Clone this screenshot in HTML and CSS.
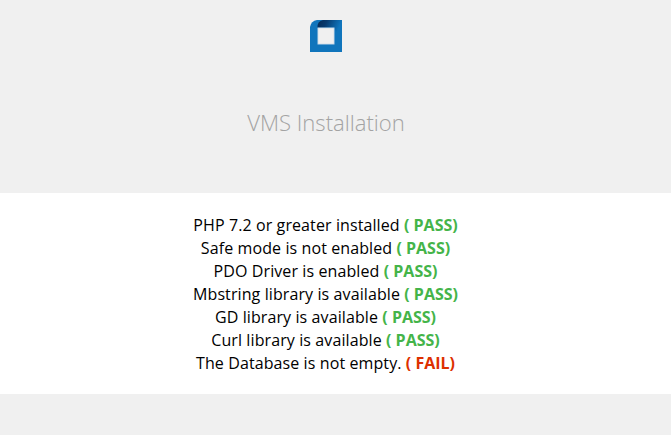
FILE: index.html
```
<!DOCTYPE html>
<html lang="en">
<head>
<meta charset="utf-8">
<title>VMS Installation</title>
<link rel="stylesheet" href="styles.css">
</head>
<body>
<header class="header">
<svg class="logo" viewBox="0 0 32 32" aria-hidden="true">
<defs><linearGradient id="shade" x1="8" y1="2" x2="28" y2="10" gradientUnits="userSpaceOnUse"><stop offset="0" stop-color="#052c58"/><stop offset=".35" stop-color="#06396d"/><stop offset="1" stop-color="#1075bc"/></linearGradient></defs>
<path fill="#1075bc" d="M7 0H32V32H0V7Q1 1 7 0Z"/>
<path fill="url(#shade)" d="M13 0H32V20L24 8H7.5Q7 1 13 0Z"/>
<path fill="#f0f0f0" stroke="#7fb2da" stroke-width=".6" d="M7.7 7.7H24.3V24.3H7.7Z"/>
</svg>
<h1 class="title">VMS Installation</h1>
</header>
<main class="panel">
<ul class="checks">
<li>PHP 7.2 or greater installed <b class="pass">( PASS)</b></li>
<li>Safe mode is not enabled <b class="pass">( PASS)</b></li>
<li>PDO Driver is enabled <b class="pass">( PASS)</b></li>
<li>Mbstring library is available <b class="pass">( PASS)</b></li>
<li>GD library is available <b class="pass">( PASS)</b></li>
<li>Curl library is available <b class="pass">( PASS)</b></li>
<li>The Database is not empty. <b class="fail">( FAIL)</b></li>
</ul>
</main>
</body>
</html>
```
FILE: styles.css
```
body {
  margin: 0;
  background: #f0f0f0;
  color: #000;
  font: 16px/23px "Open Sans", sans-serif;
}
.header {
  display: flex;
  flex-direction: column;
  align-items: center;
  height: 193px;
  padding: 20px 19px 0 0;
  box-sizing: border-box;
}
.logo {
  width: 32px;
  height: 32px;
}
.title {
  margin: 53px 0 0;
  font: 300 22.1px/34px "Open Sans", sans-serif;
  color: #a3a3a3;
}
.panel {
  height: 201px;
  padding: 21px 20px 0 0;
  box-sizing: border-box;
  background: #fff;
  text-align: center;
}
.checks {
  margin: 0;
  padding: 0;
  list-style: none;
  letter-spacing: 0.1px;
}
.pass,
.fail {
  letter-spacing: 0;
}
.pass {
  color: #44b449;
}
.fail {
  color: #dd3000;
}
```
